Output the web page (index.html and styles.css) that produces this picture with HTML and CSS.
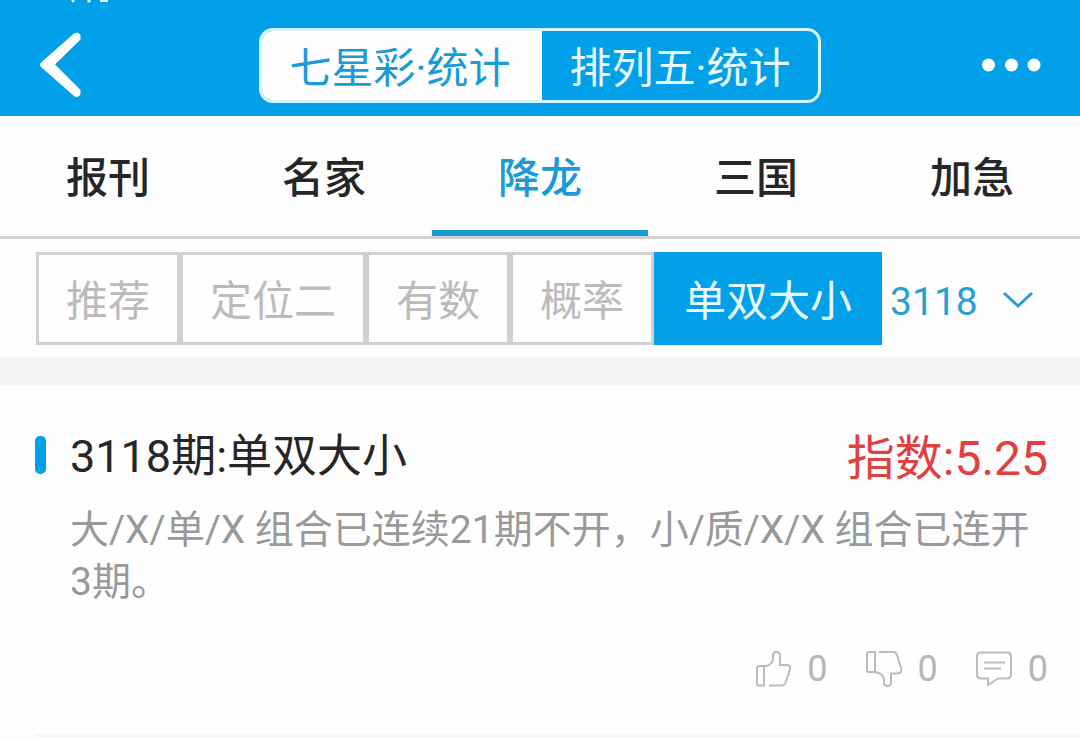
FILE: index.html
```html
<!DOCTYPE html>
<html lang="zh-CN">
<head>
<meta charset="utf-8">
<meta name="viewport" content="width=device-width, initial-scale=1">
<title>七星彩·统计</title>
<link rel="stylesheet" href="styles.css">
</head>
<body>
<header class="topbar">
  <svg class="status-trace" width="44" height="4" viewBox="0 0 44 4" aria-hidden="true"><path d="M5 1.500 7 0M21 0l2 2M33 .500h8" /></svg>
  <button class="icon-button" type="button" aria-label="返回">
    <svg width="42" height="66" viewBox="0 0 42 66" aria-hidden="true"><path class="back-shape" d="M35 1.500Q39-.5 41.500 3V7.500L16 32.500 41.500 58v4.500Q39 66.500 35 64L2 35Q0 32.500 2 30.500Z"/></svg>
  </button>
  <div class="segments">
    <button class="segment segment-active" type="button" aria-pressed="true">七星彩·统计</button>
    <button class="segment" type="button" aria-pressed="false">排列五·统计</button>
  </div>
  <button class="icon-button icon-button-end" type="button" aria-label="更多">
    <svg width="60" height="14" viewBox="0 0 60 14" fill="#fff" aria-hidden="true"><circle cx="7.500" cy="7" r="6.500"/><circle cx="30.500" cy="7" r="6.500"/><circle cx="53" cy="7" r="6.500"/></svg>
  </button>
</header>
<nav class="tabs">
  <a class="tab" href="#baokan">报刊</a>
  <a class="tab" href="#mingjia">名家</a>
  <a class="tab tab-active" href="#xianglong" aria-current="page">降龙</a>
  <a class="tab" href="#sanguo">三国</a>
  <a class="tab" href="#jiaji">加急</a>
</nav>
<div class="filters">
  <button class="filter" type="button">推荐</button>
  <button class="filter" type="button">定位二</button>
  <button class="filter" type="button">有数</button>
  <button class="filter" type="button">概率</button>
  <button class="filter filter-active" type="button">单双大小</button>
  <label class="issue">
    <select class="issue-select" aria-label="期号"><option>3118</option></select>
    <svg width="32" height="24" viewBox="0 0 32 24" aria-hidden="true"><path class="chevron" d="M2 3l14 13L30 3"/></svg>
  </label>
</div>
<main class="feed">
  <article class="card">
    <div class="card-head">
      <h2 class="card-title">3118期:单双大小</h2>
      <span class="card-index">指数:5.25</span>
    </div>
    <p class="card-text">大/X/单/X 组合已连续21期不开，小/质/X/X 组合已连开3期。</p>
    <div class="actions">
      <button class="action" type="button" aria-label="赞 0">
        <svg class="action-icon" width="36" height="36" viewBox="0 0 36 36" aria-hidden="true"><path d="M4 15h5v19.500H4q-2 0-2-2V17q0-2 2-2zM9 15.500c6-1 9-4 9-8V4q0-3 3.500-3T25 4v10h6q5 0 4 4l-4.500 14q-1 2.500-4 2.500H14"/></svg>
        <span>0</span>
      </button>
      <button class="action" type="button" aria-label="踩 0">
        <svg class="action-icon" width="36" height="36" viewBox="0 0 36 36" aria-hidden="true"><path d="M3 1h6v20H3q-2 0-2-2V3q0-2 2-2zM9 21c5 1 9 3.500 9 8v3q0 3 3.500 3t3.500-3V22.500h6q4.500 0 4.500-4L31 4q-1-3-4-3H13"/></svg>
        <span>0</span>
      </button>
      <button class="action" type="button" aria-label="评论 0">
        <svg class="action-icon" width="36" height="36" viewBox="0 0 36 36" aria-hidden="true"><path d="M5 1.500h26q4 0 4 4v18q0 4-4 4h-9L12 34v-6.500H5q-4 0-4-4v-18q0-4 4-4zM8 11.500h21M8 17.500h17"/></svg>
        <span>0</span>
      </button>
    </div>
  </article>
</main>
</body>
</html>
```
FILE: styles.css
```css
* {
  box-sizing: border-box;
}

body {
  margin: 0;
  background: #fefefe;
  color: #262626;
  font-family: Roboto, "Noto Sans CJK SC", sans-serif;
  font-size: 42px;
}

button,
select {
  margin: 0;
  padding: 0;
  border: 0;
  background: none;
  color: inherit;
  font: inherit;
}

svg {
  display: block;
  flex: none;
}

.topbar {
  position: relative;
  display: flex;
  align-items: center;
  height: 116px;
  padding: 14px 39px 0;
  background: #02a0e9;
}

.status-trace {
  position: absolute;
  top: 0;
  left: 67px;
  fill: none;
  stroke: #e6f7ff;
  stroke-width: 3;
}

.icon-button {
  display: flex;
  flex: 1;
}

.icon-button-end {
  justify-content: flex-end;
}

.back-shape {
  fill: #fff;
}

.segments {
  display: flex;
  height: 75px;
  border: 3px solid #d5f5ff;
  border-radius: 14px;
  background: #02a0e9;
  overflow: hidden;
}

.segment {
  padding: 6px 28px 0;
  color: #e9fbff;
  line-height: 63px;
  white-space: nowrap;
}

.segment-active {
  border-right: 3px solid #fefefe;
  background: #fefefe;
  color: #1a9bd8;
}

.tabs {
  display: flex;
  border-bottom: 3px solid #d0d0d0;
}

.tab {
  flex: 1;
  padding: 12px 0 0;
  border-bottom: 6px solid transparent;
  color: #262626;
  font-weight: 500;
  line-height: 102px;
  text-align: center;
  text-decoration: none;
}

.tab-active {
  border-color: #1a9bd8;
  color: #1a9bd8;
}

.filters {
  display: flex;
  padding: 13px 36px 12px;
  border-bottom: 28px solid #f4f4f4;
}

.filter {
  padding: 6px 27px 0;
  border: 3px solid #d0d0d0;
  color: #bbb;
  line-height: 81px;
  white-space: nowrap;
}

.filter-active {
  border-color: #02a0e9;
  background: #02a0e9;
  color: #e9fbff;
}

.issue {
  display: flex;
  align-items: center;
  gap: 24px;
  padding: 6px 0 0 8px;
  color: #2a9fd6;
}

.issue-select {
  appearance: none;
  font-size: 39px;
}

.chevron {
  fill: none;
  stroke: #2a9fd6;
  stroke-width: 3;
}

.feed {
  padding-left: 35px;
}

.card {
  padding: 36px 32px 43px 0;
  border-bottom: 3px solid #f6f6f6;
}

.card-head {
  display: flex;
  align-items: center;
  justify-content: space-between;
  line-height: 68px;
}

.card-title {
  display: flex;
  align-items: center;
  gap: 24px;
  margin: 0;
  font-size: 45px;
  font-weight: 400;
}

.card-title::before {
  content: "";
  width: 11px;
  height: 38px;
  margin-bottom: 4px;
  border-radius: 5px;
  background: #02a0e9;
}

.card-index {
  padding-top: 4px;
  color: #e04040;
  font-size: 48px;
}

.card-text {
  margin: 11px 0 0;
  padding: 0 12px 0 35px;
  color: #999;
  font-size: 39px;
  line-height: 52px;
}

.actions {
  display: flex;
  justify-content: flex-end;
  gap: 38px;
  margin-top: 39px;
}

.action {
  display: flex;
  align-items: center;
  gap: 16px;
  color: #b5b5b5;
  font-size: 36px;
  line-height: 44px;
}

.action-icon {
  fill: none;
  stroke: #bbb;
  stroke-width: 2;
}
```
